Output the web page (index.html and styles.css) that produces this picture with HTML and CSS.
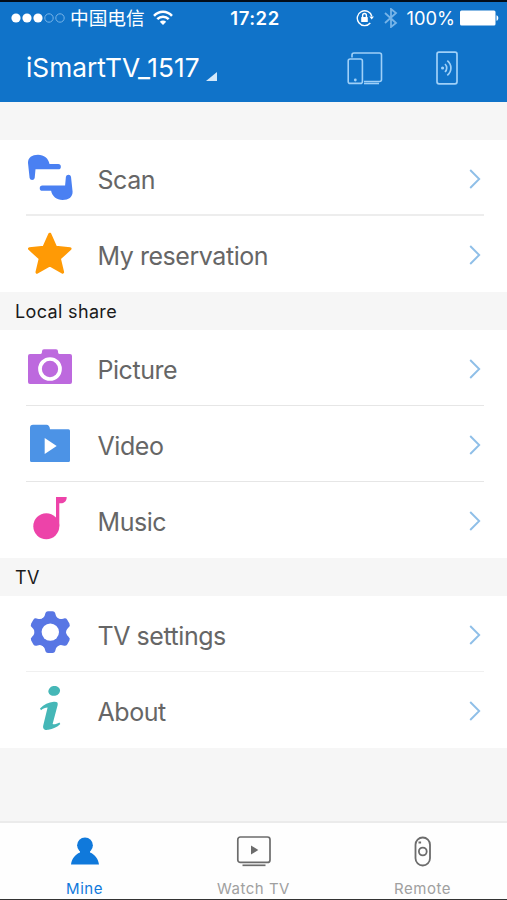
FILE: index.html
```html
<!DOCTYPE html>
<html lang="en">
<head>
    <meta charset="UTF-8" />
    <meta name="viewport" content="width=device-width, initial-scale=1.0"/>
    <title>iSmartTV</title>
    <link rel="stylesheet" href="styles.css">
</head>
<body>
    <div class="app">
        <header class="header">
            <div class="status-bar">
                <div class="status-left">
                    <svg class="signal" width="54" height="12" viewBox="0 0 54 12">
                        <g fill="#fff"><circle cx="5" cy="6" r="4.6"/><circle cx="16" cy="6" r="4.6"/><circle cx="27" cy="6" r="4.6"/></g>
                        <g fill="none" stroke="#77b4e8"><circle cx="38" cy="6" r="4.2"/><circle cx="49" cy="6" r="4.2"/></g>
                    </svg>
                    <span class="carrier">中国电信</span>
                    <svg width="20" height="16" viewBox="0 0 20 16" fill="none" stroke="#fff" stroke-width="2.5">
                        <path d="M1 5.8C6 .3 14 .3 19 5.8M4.3 9.2c3.2-3.4 8.2-3.4 11.4 0"/>
                        <path d="M10 15l-3.2-3.3c1.8-1.7 4.6-1.7 6.4 0z" fill="#fff" stroke="none"/>
                    </svg>
                </div>
                <span class="time">17:22</span>
                <div class="status-right">
                    <svg width="18" height="18" viewBox="0 0 18 18" fill="none" stroke="#fff" stroke-width="1.4">
                        <path d="M15.8 7.2A7.4 7.4 0 1 0 14.3 14"/>
                        <path d="M13.3 7.4h4.6l-2.2 3.2z" fill="#fff" stroke="none"/>
                        <rect x="5.2" y="8" width="6.6" height="5" rx=".6" fill="#fff" stroke="none"/>
                        <path d="M6.600 8.200V6.400a1.900 1.900 0 0 1 3.800 0v1.800"/>
                    </svg>
                    <svg class="bluetooth" width="14" height="20" viewBox="0 0 14 20" fill="none" stroke="#77b4e8" stroke-width="1.8">
                        <path d="M1 5l11 10-5 4V1l5 4L1 15"/>
                    </svg>
                    <span class="percent">100%</span>
                    <svg width="39" height="16" viewBox="0 0 39 16" fill="#fff">
                        <rect x="0" y="0.5" width="35.5" height="15" rx="1.5"/>
                        <path d="M36.5 5.2c2.4.8 2.4 4.8 0 5.6z"/>
                    </svg>
                </div>
            </div>
            <div class="title-bar">
                <h1 class="device-name">iSmartTV_1517</h1>
                <svg class="corner" width="11" height="9" viewBox="0 0 11 9"><path d="M11 0v9H0z" fill="#d3e8fa"/></svg>
                <svg class="devices" width="36" height="34" viewBox="0 0 36 34" fill="none" stroke="#9fd0f8" stroke-width="1.6">
                    <path d="M5 6.500V4a2 2 0 0 1 2-2h25.500a2 2 0 0 1 2 2v24.500a2 2 0 0 1-2 2H17"/>
                    <rect x="1.200" y="8" width="14.200" height="24.400" rx="2"/>
                    <path d="M17 32.500h15"/>
                    <circle cx="8.300" cy="29" r="1.400" fill="#9fd0f8" stroke="none"/>
                </svg>
                <svg class="cast" width="22" height="34" viewBox="0 0 22 34" fill="none" stroke="#9fd0f8" stroke-width="1.7">
                    <rect x="1" y="1.200" width="20" height="31.600" rx="2"/>
                    <circle cx="6.600" cy="17" r="1.600" fill="#9fd0f8" stroke="none"/>
                    <path d="M9 13c2.300 2.200 2.300 5.800 0 8M11.300 9.600c4.800 4 4.800 10.800 0 14.800"/>
                </svg>
            </div>
        </header>

        <main class="content">
            <ul class="list">
                <li class="row thick">
                    <svg class="icon" viewBox="0 0 48 48" fill="#4a80f2">
                        <path id="hand" d="M2 9C2 3.500 6 .8 12 .8S22.500 4.500 23.500 10H32.200a2.650 2.650 0 0 1 0 5.300H9.500L8.700 24a2.600 2.600 0 0 1-5.100 0z"/>
                        <use href="#hand" transform="rotate(180 24.300 23.400)"/>
                    </svg>
                    <span class="label">Scan</span>
                    <svg class="arrow" viewBox="0 0 12 20"><path d="M1.200 1l9 9-9 9"/></svg>
                </li>
                <li class="row">
                    <svg class="icon" viewBox="0 0 48 48">
                        <path d="M23.800 4.200l5.900 13.100 14.400 1.400-10.700 9.800 3.200 13.700-12.800-7.200L11 42.200l3.200-13.700L3.500 18.700l14.400-1.400z" fill="#ff9a05" stroke="#ff9a05" stroke-width="3" stroke-linejoin="round"/>
                    </svg>
                    <span class="label">My reservation</span>
                    <svg class="arrow" viewBox="0 0 12 20"><path d="M1.200 1l9 9-9 9"/></svg>
                </li>
            </ul>

            <h2 class="section-title">Local share</h2>
            <ul class="list">
                <li class="row">
                    <svg class="icon" viewBox="0 0 48 48">
                        <path d="M4 10h10.500q1.500 0 1.500-2V7.300q0-2 2-2h12q2 0 2 2V8q0 2 1.500 2H44a2 2 0 0 1 2 2v26a2 2 0 0 1-2 2H4a2 2 0 0 1-2-2V12a2 2 0 0 1 2-2z" fill="#bd69de"/>
                        <circle cx="24" cy="25" r="10" fill="none" stroke="#fff" stroke-width="3.700"/>
                    </svg>
                    <span class="label">Picture</span>
                    <svg class="arrow" viewBox="0 0 12 20"><path d="M1.200 1l9 9-9 9"/></svg>
                </li>
                <li class="row">
                    <svg class="icon" viewBox="0 0 48 48">
                        <path d="M7 4.700h13.500q3 0 3.500 4.600h18.500q1.500 0 1.500 1.500V40.500q0 1.500-1.500 1.500h-37Q4 42 4 40.500V8q0-3.300 3-3.300z" fill="#4c93e6"/>
                        <path d="M18.700 18l12 8-12 8z" fill="#fff"/>
                    </svg>
                    <span class="label">Video</span>
                    <svg class="arrow" viewBox="0 0 12 20"><path d="M1.200 1l9 9-9 9"/></svg>
                </li>
                <li class="row">
                    <svg class="icon" viewBox="0 0 48 48" fill="#ed43a9">
                        <circle cx="20.300" cy="30.300" r="13"/>
                        <path d="M30 1h10.700c0 4-2.300 6.300-6 6.300h-1.400v23H30z"/>
                    </svg>
                    <span class="label">Music</span>
                    <svg class="arrow" viewBox="0 0 12 20"><path d="M1.200 1l9 9-9 9"/></svg>
                </li>
            </ul>

            <h2 class="section-title">TV</h2>
            <ul class="list">
                <li class="row thin">
                    <svg class="icon" viewBox="0 0 48 48">
                        <g fill="#5876e4">
                            <circle cx="24.300" cy="22.100" r="15.500"/>
                            <path id="teeth" d="M14.800 9.500q3.600-1.700 4.300-5.200.5-3 3-3h4.400q2.500 0 3 3 .7 3.500 4.300 5.200v25.200q-3.600 1.700-4.300 5.200-.5 3-3 3h-4.400q-2.500 0-3-3-.7-3.500-4.300-5.200z"/>
                            <use href="#teeth" transform="rotate(60 24.300 22.100)"/>
                            <use href="#teeth" transform="rotate(120 24.300 22.100)"/>
                        </g>
                        <circle cx="24.300" cy="22.100" r="8.700" fill="#fff"/>
                    </svg>
                    <span class="label">TV settings</span>
                    <svg class="arrow" viewBox="0 0 12 20"><path d="M1.200 1l9 9-9 9"/></svg>
                </li>
                <li class="row">
                    <svg class="icon" viewBox="0 0 48 48" fill="#45b7b7">
                        <ellipse cx="28.200" cy="4.900" rx="5.900" ry="4.900" transform="rotate(-12 28.200 4.900)"/>
                        <path d="M14 22.500c4-4 8.500-6.400 13.800-6.800 3.300-.2 4.500.8 3.800 3.600l-5 18.800c1.700.6 4.500-.4 6.800-1.600l.9 1.500c-3.200 3.200-7.500 5.100-12 5.800-3.900.6-5.900-1-5-4.600l4.300-17.600c-2.300.2-4.500 1-6.600 2.600z"/>
                    </svg>
                    <span class="label">About</span>
                    <svg class="arrow" viewBox="0 0 12 20"><path d="M1.200 1l9 9-9 9"/></svg>
                </li>
            </ul>
        </main>

        <nav class="tab-bar">
            <a class="tab active">
                <svg width="36" height="32" viewBox="0 0 36 32" fill="#1079db">
                    <circle cx="18" cy="9.300" r="7.900"/>
                    <path d="M13 14h10v2.500c5 2 8.300 6.500 9 12H4c.7-5.500 4-10 9-12z"/>
                </svg>
                <span>Mine</span>
            </a>
            <a class="tab">
                <svg width="36" height="32" viewBox="0 0 36 32" fill="none" stroke="#6c6c6c" stroke-width="1.700">
                    <rect x="1.800" y="1" width="32.200" height="25.400" rx="2.500"/>
                    <path d="M6.500 29.300h23"/>
                    <path d="M15 9.500l7.300 4.500-7.300 4.500z" fill="#6c6c6c" stroke="none"/>
                </svg>
                <span>Watch TV</span>
            </a>
            <a class="tab">
                <svg width="36" height="32" viewBox="0 0 36 32" fill="none" stroke="#6c6c6c" stroke-width="1.800">
                    <rect x="10.500" y="1.500" width="14.500" height="28" rx="7.250"/>
                    <circle cx="17.800" cy="15.500" r="3.900"/>
                    <path d="M13.500 6.500h2.600" stroke-width="2"/>
                </svg>
                <span>Remote</span>
            </a>
        </nav>
    </div>
</body>
</html>
```
FILE: styles.css
```css
* {
    box-sizing: border-box;
    margin: 0;
    padding: 0;
}

body {
    font-family: Inter, "Noto Sans CJK SC", sans-serif;
    background: #f6f6f6;
}

svg {
    display: block;
    flex-shrink: 0;
}

.app {
    display: flex;
    flex-direction: column;
    height: 900px;
    border-top: 2px solid #030d18;
    border-bottom: 1px solid #333;
    overflow: hidden;
}

.header {
    height: 100px;
    background: #1073c9;
    color: #fff;
}

.status-bar {
    display: grid;
    grid-template-columns: 1fr auto 1fr;
    align-items: center;
    height: 32px;
    padding: 0 8px 0 11px;
}

.status-left,
.status-right {
    display: flex;
    align-items: center;
}

.status-right {
    justify-content: flex-end;
}

.carrier {
    margin: 0 8px 0 5px;
    font-family: "Noto Sans CJK SC", sans-serif;
    font-size: 18.7px;
    line-height: 30px;
    margin-bottom: 2px;
}

.time {
    font-size: 18.5px;
    font-weight: 600;
    letter-spacing: 0.5px;
}

.bluetooth {
    margin: 0 9px 0 10px;
}

.percent {
    margin-right: 5px;
    font-size: 18.3px;
}

.title-bar {
    display: flex;
    align-items: center;
    height: 68px;
    padding: 0 49px 0 26px;
}

.device-name {
    font-size: 26.3px;
    font-weight: 400;
    line-height: 32px;
}

.corner {
    margin: 17px 0 0 6px;
}

.devices {
    margin: 0 53px 1px auto;
}

.cast {
    margin-bottom: 1px;
}

.content {
    flex: 1;
    padding-top: 38px;
}

.list {
    list-style: none;
    padding: 0 23px 0 26px;
    background: #fff;
}

.row {
    display: flex;
    align-items: flex-start;
    height: 76px;
    padding-top: 14px;
    border-bottom: 1px solid #e6e6e6;
}

.row.thick {
    border-bottom: 2px solid #ededed;
}

.row.thin {
    border-bottom-color: #f0f0f0;
}

.row:last-child {
    border-bottom: none;
}

.icon {
    width: 48px;
    height: 48px;
}

.label {
    flex: 1;
    margin: 10px 0 0 23.5px;
    font-size: 25px;
    line-height: 32px;
    letter-spacing: -0.45px;
    color: #666;
}

.arrow {
    width: 12px;
    height: 20px;
    margin: 15px 3px 0 0;
    fill: none;
    stroke: #8fbfe8;
    stroke-width: 1.9;
}

.section-title {
    height: 38px;
    padding: 1px 0 0 15px;
    font-size: 18px;
    font-weight: 400;
    line-height: 37px;
    letter-spacing: 0.35px;
    color: #1a1a1a;
    background: #f6f6f6;
}

.tab-bar {
    display: grid;
    grid-template-columns: repeat(3, 1fr);
    height: 78px;
    border-top: 2px solid #ebebeb;
    background: #fefefe;
}

.tab {
    display: flex;
    flex-direction: column;
    align-items: center;
    padding-top: 13px;
    font-size: 15px;
    line-height: 20px;
    letter-spacing: 0.5px;
    color: #a0a0a0;
}

.tab span {
    margin-top: 11px;
}

.tab.active {
    color: #1079db;
}
```
